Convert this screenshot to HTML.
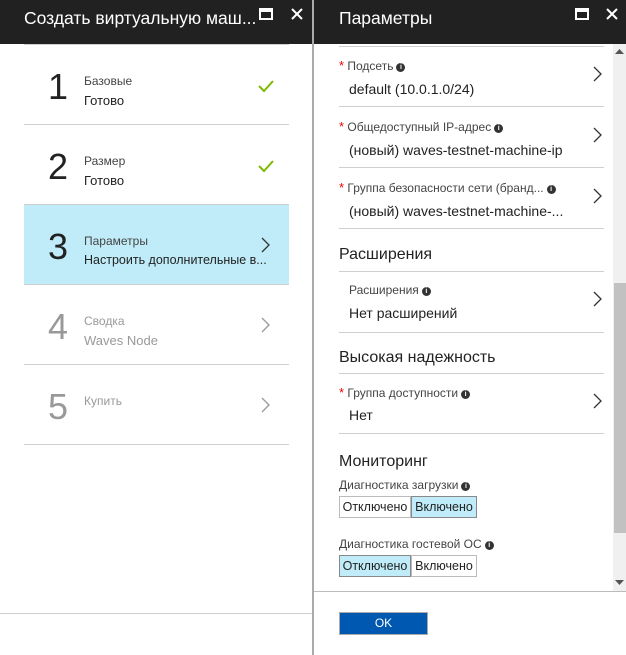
<!DOCTYPE html>
<html><head><meta charset="utf-8"><style>
*{margin:0;padding:0;box-sizing:border-box}
body{width:626px;height:655px;background:#fff;position:relative;overflow:hidden;font-family:"Liberation Sans","DejaVu Sans",sans-serif;color:#222}
.a{position:absolute}
.hd{background:#212121;height:44px;top:0}
.ht{color:#fff;font-size:17.5px;top:8px;white-space:nowrap}
.ln{height:1px;background:#cfcfcf}
.num{font-size:36px;color:#222}
.s1{font-size:12px;color:#444}
.s2{font-size:13px;color:#222}
.g{color:#999!important}
.lab{font-size:12px;color:#444;white-space:nowrap}
.val{font-size:14px;color:#222;white-space:nowrap}
.sec{font-size:16px;color:#222}
.st{color:#e00;font-size:13px}
.i{display:inline-block;width:9px;height:9px;border-radius:50%;background:#333;color:#fff;font-size:7px;line-height:9px;text-align:center;font-weight:bold;vertical-align:1px;margin-left:3px}
.btn{font-size:12.5px;border:1px solid #bbb;height:22px;line-height:20px;text-align:center;color:#222}
</style></head><body>
<!-- left -->
<div class="a hd" style="left:0;width:312px"></div>
<div class="a ht" style="left:24px">Создать виртуальную маш...</div>
<svg class="a" style="left:259px;top:8px" width="14" height="12"><rect x="1" y="1" width="12" height="10" fill="none" stroke="#fff" stroke-width="2"/><rect x="1" y="1" width="12" height="3" fill="#fff"/></svg>
<svg class="a" style="left:290px;top:7px" width="14" height="14"><path d="M2 2L12 12M12 2L2 12" stroke="#fff" stroke-width="2"/></svg>
<div class="a ln" style="left:24px;top:44px;width:265px"></div>
<div class="a num" style="left:48px;top:66px">1</div>
<div class="a s1" style="left:84px;top:74px">Базовые</div>
<div class="a s2" style="left:84px;top:93px">Готово</div>
<svg class="a" style="left:258px;top:79px" width="16" height="14"><path d="M1 7L6 12L15 2" stroke="#7fba00" stroke-width="2" fill="none"/></svg>
<div class="a ln" style="left:24px;top:124px;width:265px"></div>
<div class="a num" style="left:48px;top:146px">2</div>
<div class="a s1" style="left:84px;top:154px">Размер</div>
<div class="a s2" style="left:84px;top:173px">Готово</div>
<svg class="a" style="left:258px;top:159px" width="16" height="14"><path d="M1 7L6 12L15 2" stroke="#7fba00" stroke-width="2" fill="none"/></svg>
<div class="a ln" style="left:24px;top:204px;width:265px"></div>
<div class="a" style="left:24px;top:205px;width:265px;height:79px;background:#bfecf8"></div>
<div class="a num" style="left:48px;top:226px">3</div>
<div class="a s1" style="left:84px;top:234px">Параметры</div>
<div class="a s2" style="left:84px;top:253px;font-size:12.5px">Настроить дополнительные в...</div>
<svg class="a" style="left:261px;top:237px" width="10" height="16"><path d="M1 1L8 8L1 15" stroke="#333" stroke-width="1.3" fill="none"/></svg>
<div class="a ln" style="left:24px;top:284px;width:265px"></div>
<div class="a num g" style="left:48px;top:306px">4</div>
<div class="a s1 g" style="left:84px;top:314px">Сводка</div>
<div class="a s2 g" style="left:84px;top:333px">Waves Node</div>
<svg class="a" style="left:261px;top:317px" width="10" height="16"><path d="M1 1L8 8L1 15" stroke="#999" stroke-width="1.3" fill="none"/></svg>
<div class="a ln" style="left:24px;top:364px;width:265px"></div>
<div class="a num g" style="left:48px;top:386px">5</div>
<div class="a s1 g" style="left:84px;top:394px">Купить</div>
<svg class="a" style="left:261px;top:397px" width="10" height="16"><path d="M1 1L8 8L1 15" stroke="#999" stroke-width="1.3" fill="none"/></svg>
<div class="a ln" style="left:24px;top:444px;width:265px"></div>
<div class="a ln" style="left:0;top:613px;width:312px"></div>
<div class="a" style="left:312px;top:0;width:2px;height:655px;background:#aaa"></div>
<!-- right -->
<div class="a hd" style="left:314px;width:312px"></div>
<div class="a ht" style="left:339px">Параметры</div>
<svg class="a" style="left:575px;top:8px" width="14" height="12"><rect x="1" y="1" width="12" height="10" fill="none" stroke="#fff" stroke-width="2"/><rect x="1" y="1" width="12" height="3" fill="#fff"/></svg>
<svg class="a" style="left:605px;top:7px" width="14" height="14"><path d="M2 2L12 12M12 2L2 12" stroke="#fff" stroke-width="2"/></svg>
<div class="a" style="left:613px;top:44px;width:13px;height:547px;background:#f0f0f0"></div>
<div class="a" style="left:614px;top:283px;width:12px;height:250px;background:#c1c1c1"></div>
<svg class="a" style="left:615px;top:49px" width="9" height="6"><path d="M0 5L4.5 0L9 5Z" fill="#555"/></svg>
<svg class="a" style="left:615px;top:580px" width="9" height="6"><path d="M0 0L4.5 5L9 0Z" fill="#555"/></svg>
<div class="a ln" style="left:339px;top:46px;width:265px"></div>
<div class="a lab" style="left:339px;top:58px"><span class="st">*</span> Подсеть<span class="i">i</span></div>
<div class="a val" style="left:349px;top:81px">default (10.0.1.0/24)</div>
<svg class="a" style="left:593px;top:66px" width="10" height="16"><path d="M1 1L8 8L1 15" stroke="#333" stroke-width="1.3" fill="none"/></svg>
<div class="a ln" style="left:339px;top:106px;width:265px"></div>
<div class="a lab" style="left:339px;top:119px"><span class="st">*</span> Общедоступный IP-адрес<span class="i">i</span></div>
<div class="a val" style="left:349px;top:142px">(новый) waves-testnet-machine-ip</div>
<svg class="a" style="left:593px;top:127px" width="10" height="16"><path d="M1 1L8 8L1 15" stroke="#333" stroke-width="1.3" fill="none"/></svg>
<div class="a ln" style="left:339px;top:167px;width:265px"></div>
<div class="a lab" style="left:339px;top:180px"><span class="st">*</span> Группа безопасности сети (бранд...<span class="i">i</span></div>
<div class="a val" style="left:349px;top:203px">(новый) waves-testnet-machine-...</div>
<svg class="a" style="left:593px;top:188px" width="10" height="16"><path d="M1 1L8 8L1 15" stroke="#333" stroke-width="1.3" fill="none"/></svg>
<div class="a ln" style="left:339px;top:228px;width:265px"></div>
<div class="a sec" style="left:339px;top:246px">Расширения</div>
<div class="a ln" style="left:339px;top:271px;width:265px"></div>
<div class="a lab" style="left:349px;top:283px">Расширения<span class="i">i</span></div>
<div class="a val" style="left:349px;top:305px">Нет расширений</div>
<svg class="a" style="left:593px;top:291px" width="10" height="16"><path d="M1 1L8 8L1 15" stroke="#333" stroke-width="1.3" fill="none"/></svg>
<div class="a ln" style="left:339px;top:332px;width:265px"></div>
<div class="a sec" style="left:339px;top:349px">Высокая надежность</div>
<div class="a ln" style="left:339px;top:373px;width:265px"></div>
<div class="a lab" style="left:339px;top:385px"><span class="st">*</span> Группа доступности<span class="i">i</span></div>
<div class="a val" style="left:349px;top:407px">Нет</div>
<svg class="a" style="left:593px;top:393px" width="10" height="16"><path d="M1 1L8 8L1 15" stroke="#333" stroke-width="1.3" fill="none"/></svg>
<div class="a ln" style="left:339px;top:433px;width:265px"></div>
<div class="a sec" style="left:339px;top:453px">Мониторинг</div>
<div class="a lab" style="left:339px;top:478px">Диагностика загрузки<span class="i">i</span></div>
<div class="a btn" style="left:339px;top:496px;width:72px">Отключено</div>
<div class="a btn" style="left:411px;top:496px;width:66px;background:#bfecf8;border-color:#888">Включено</div>
<div class="a lab" style="left:339px;top:537px">Диагностика гостевой ОС<span class="i">i</span></div>
<div class="a btn" style="left:339px;top:555px;width:72px;background:#bfecf8;border-color:#888">Отключено</div>
<div class="a btn" style="left:411px;top:555px;width:66px">Включено</div>
<div class="a ln" style="left:314px;top:591px;width:312px;background:#bbb"></div>
<div class="a" style="left:339px;top:612px;width:89px;height:23px;background:#0058b0;border:1px solid #aaa;color:#fff;font-size:12px;text-align:center;line-height:21px">OK</div>
</body></html>
